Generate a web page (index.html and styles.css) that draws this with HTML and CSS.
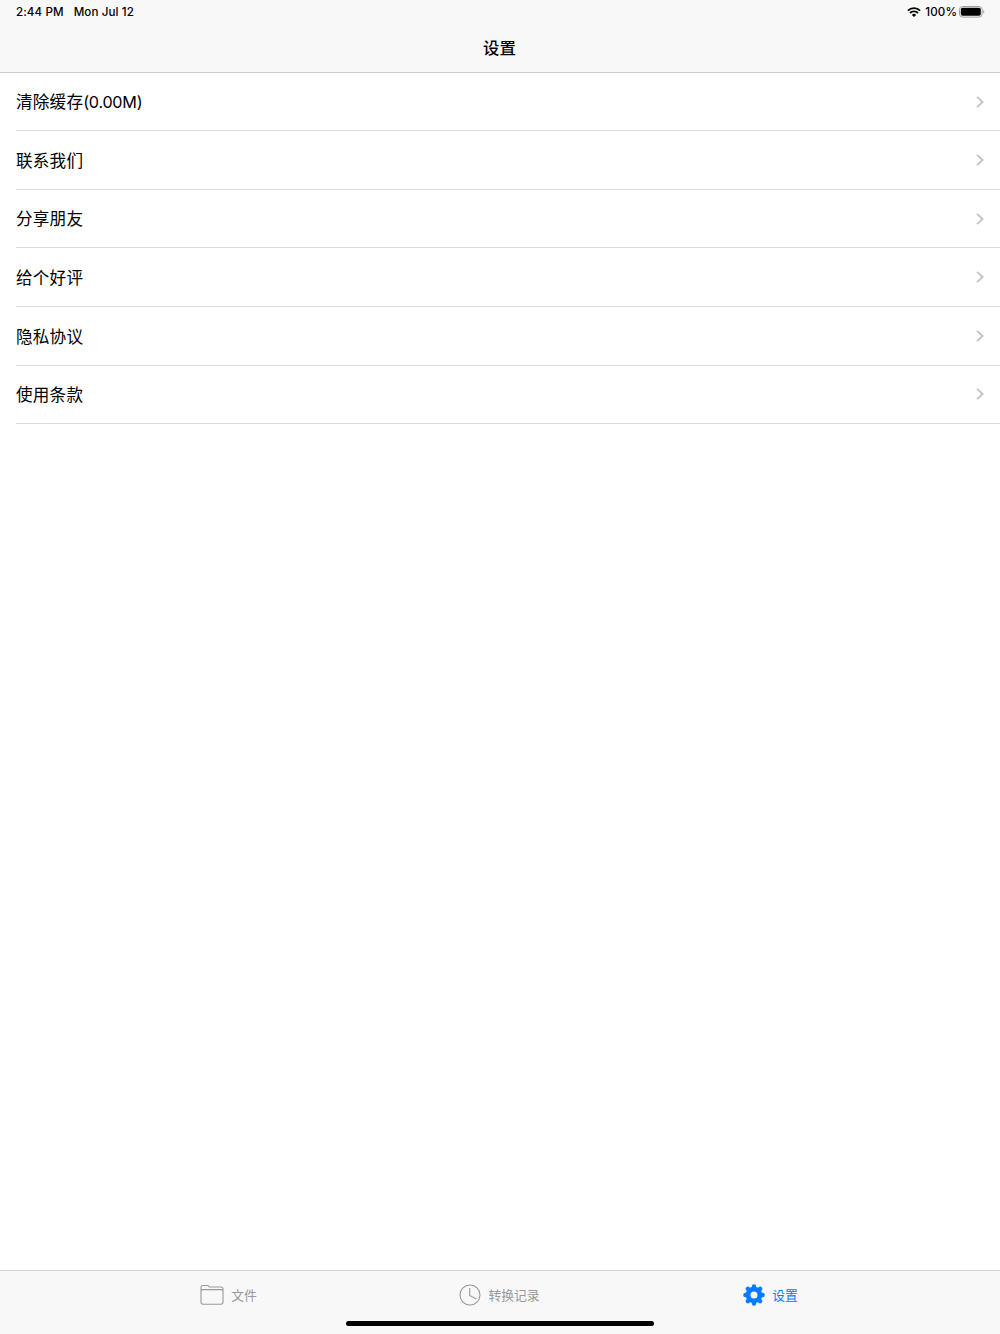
FILE: index.html
```html
<!DOCTYPE html>
<html lang="zh-CN">
<head>
  <meta charset="UTF-8" />
  <meta name="viewport" content="width=device-width, initial-scale=1.0"/>
  <title>设置</title>
  <link rel="stylesheet" href="styles.css">
</head>
<body>

  <!-- Header -->
  <header>
    <div class="status-bar">
      <div class="status-left">
        <span>2:44 PM</span>
        <span>Mon Jul 12</span>
      </div>
      <div class="status-right">
        <svg class="wifi" viewBox="0 0 14 10">
          <path d="M0.9 3.7a8.7 8.7 0 0 1 12.2 0M3 6a5.7 5.7 0 0 1 8 0" fill="none" stroke="#000" stroke-width="1.8"/>
          <path d="M7 10L4.9 7.9a3 3 0 0 1 4.2 0z"/>
        </svg>
        <span class="percent">100%</span>
        <svg class="battery" viewBox="0 0 26 12">
          <rect x="0.5" y="0.5" width="22.6" height="10.6" rx="3" fill="none" stroke="#a0a0a0"/>
          <rect x="1.8" y="1.8" width="20" height="8" rx="1.8"/>
          <path d="M24.2 4.1c1.5.6 1.5 2.8 0 3.4z" fill="#a0a0a0"/>
        </svg>
      </div>
    </div>
    <h1>设置</h1>
  </header>

  <!-- Settings List -->
  <main>
    <ul class="settings-list">
      <li><a href="#"><span>清除缓存<span class="size">(0.00M)</span></span><svg class="arrow" viewBox="0 0 8 12"><path d="M1 .8l5.6 5.2L1 11.2"/></svg></a></li>
      <li><a href="#"><span>联系我们</span><svg class="arrow" viewBox="0 0 8 12"><path d="M1 .8l5.6 5.2L1 11.2"/></svg></a></li>
      <li><a href="#"><span>分享朋友</span><svg class="arrow" viewBox="0 0 8 12"><path d="M1 .8l5.6 5.2L1 11.2"/></svg></a></li>
      <li><a href="#"><span>给个好评</span><svg class="arrow" viewBox="0 0 8 12"><path d="M1 .8l5.6 5.2L1 11.2"/></svg></a></li>
      <li><a href="#"><span>隐私协议</span><svg class="arrow" viewBox="0 0 8 12"><path d="M1 .8l5.6 5.2L1 11.2"/></svg></a></li>
      <li><a href="#"><span>使用条款</span><svg class="arrow" viewBox="0 0 8 12"><path d="M1 .8l5.6 5.2L1 11.2"/></svg></a></li>
    </ul>
  </main>

  <!-- Tab Bar -->
  <footer>
    <nav class="tab-bar">
      <a href="#">
        <svg class="icon-folder" viewBox="0 0 24 22">
          <path d="M1 5V3.2Q1 1.5 2.7 1.5H7.2Q8.2 1.5 8.7 2.3L9.2 3H21Q23 3 23 5V18Q23 20.2 20.8 20.2H3.2Q1 20.2 1 18ZM1 7.2Q1 5.6 2.8 5.6H21.2Q23 5.6 23 7.2"/>
        </svg>
        <span>文件</span>
      </a>
      <a href="#">
        <svg class="icon-clock" viewBox="0 0 22 22">
          <circle cx="11" cy="11" r="10"/>
          <path d="M10.7 4v7.4l6.6 3.5"/>
        </svg>
        <span>转换记录</span>
      </a>
      <a href="#" class="active">
        <svg class="icon-gear" viewBox="0 0 22 22">
          <circle cx="11" cy="11" r="5.9" stroke-width="4.8"/>
          <path d="M11 2.4v2M11 17.6v2M2.4 11h2M17.6 11h2M4.9 4.9l1.5 1.5M15.6 15.6l1.5 1.5M4.9 17.1l1.5-1.5M15.6 6.4l1.5-1.5" stroke-width="4.4" stroke-linecap="round"/>
        </svg>
        <span>设置</span>
      </a>
    </nav>
    <div class="home-indicator"></div>
  </footer>

</body>
</html>
```
FILE: styles.css
```css
:root {
  --primary: #087cff;
  --bar: #f8f8f8;
  --gray: #999999;
  --line: #dcdcdd;
}

* {
  margin: 0;
  padding: 0;
  box-sizing: border-box;
}

body {
  height: 100vh;
  display: flex;
  flex-direction: column;
  font-family: Inter, "Noto Sans CJK SC", sans-serif;
  background-color: white;
  color: #000;
}

a {
  color: inherit;
  text-decoration: none;
}

svg {
  display: block;
  flex-shrink: 0;
}

/* Header */
header {
  height: 73px;
  background-color: var(--bar);
  border-bottom: 1px solid #cdcdce;
}

.status-bar {
  height: 24px;
  padding: 0 15px 0 16px;
  display: flex;
  justify-content: space-between;
  align-items: center;
  font-size: 11.6px;
  font-weight: 500;
}

.status-left,
.status-right {
  display: flex;
  align-items: center;
}

.status-left {
  gap: 10px;
  letter-spacing: 0.1px;
}

.wifi {
  width: 14px;
  height: 10px;
  margin-right: 4px;
}

.percent {
  margin-right: 2px;
  letter-spacing: 0.1px;
}

.battery {
  width: 26px;
  height: 12px;
}

h1 {
  height: 48px;
  line-height: 48px;
  padding-right: 1px;
  text-align: center;
  font-size: 16.4px;
  font-weight: 500;
}

/* Settings list */
main {
  flex: 1;
}

.settings-list {
  list-style: none;
  margin-top: -0.3px;
  padding-left: 16px;
}

.settings-list li {
  height: 58.6px;
  border-bottom: 1px solid var(--line);
}

.settings-list a {
  height: 100%;
  padding-right: 16px;
  display: flex;
  justify-content: space-between;
  align-items: center;
  font-size: 16.6px;
  letter-spacing: 0.2px;
}

.settings-list a > span {
  padding-bottom: 0.4px;
}

.settings-list .size {
  font-size: 16.2px;
  letter-spacing: -0.25px;
}

.arrow {
  width: 8px;
  height: 12px;
  fill: none;
  stroke: #c2c2c4;
  stroke-width: 1.8;
}

/* Tab bar */
footer {
  height: 64px;
  background-color: var(--bar);
  border-top: 1px solid #d3d3d4;
}

.tab-bar {
  height: 48px;
  padding-right: 1px;
  display: grid;
  grid-template-columns: repeat(3, 271px);
  justify-content: center;
}

.tab-bar a {
  display: flex;
  justify-content: center;
  align-items: center;
  gap: 7px;
  font-size: 12.8px;
  color: var(--gray);
}

.tab-bar span {
  padding-bottom: 1px;
}

.tab-bar .active {
  color: var(--primary);
}

.tab-bar svg {
  width: 22px;
  height: 22px;
  fill: none;
  stroke: currentColor;
  stroke-width: 1.1;
}

.tab-bar .icon-folder {
  width: 24px;
}

.home-indicator {
  width: 308px;
  height: 5px;
  margin: 2px auto 0;
  border-radius: 3px;
  background-color: #000;
}
```
